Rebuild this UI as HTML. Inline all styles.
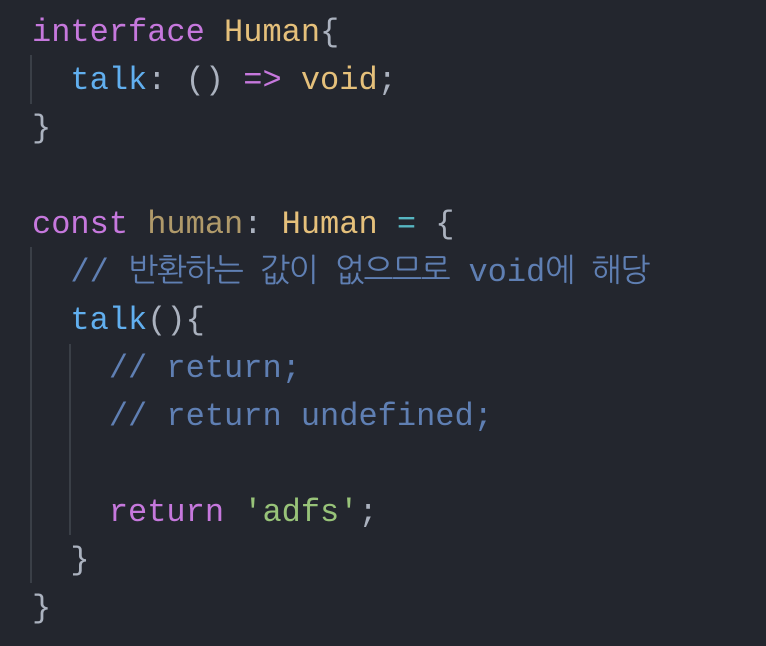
<!DOCTYPE html>
<html><head><meta charset="utf-8"><style>
html,body{margin:0;padding:0;background:#23262e;width:766px;height:646px;overflow:hidden}
.c{position:absolute;left:32px;top:0;font-family:"Liberation Mono","NanumGothic","Noto Sans CJK KR",monospace;font-size:32px;line-height:48px;color:#abb2bf}
.l{height:48px;white-space:pre}
.k{color:#c678dd}.y{color:#e5c07b}.b{color:#61afef}.h{color:#b09a6a}.cm{color:#5f7fb3}.s{color:#98c379}.o{color:#56b6c2}
.ko{letter-spacing:-1.5px}
.g{position:absolute;width:2px;background:#3a3f47}
</style></head><body>
<div class="g" style="left:30px;top:55px;height:49px"></div>
<div class="g" style="left:30px;top:247px;height:336px"></div>
<div class="g" style="left:69px;top:344px;height:191px"></div>
<div class="c" style="top:-39px">
<div class="l"><span style="opacity:.6">  }, (a)  (v)</span></div>
<div class="l"><span class="k">interface</span> <span class="y">Human</span>{</div>
<div class="l">  <span class="b">talk</span>: () <span class="k">=&gt;</span> <span class="y">void</span>;</div>
<div class="l">}</div>
<div class="l"></div>
<div class="l"><span class="k">const</span> <span class="h">human</span>: <span class="y">Human</span> <span class="o">=</span> {</div>
<div class="l">  <span class="cm">// <span class="ko">반환하는 값이 없으므로</span> void<span class="ko">에 해당</span></span></div>
<div class="l">  <span class="b">talk</span>(){</div>
<div class="l">    <span class="cm">// return;</span></div>
<div class="l">    <span class="cm">// return undefined;</span></div>
<div class="l"></div>
<div class="l">    <span class="k">return</span> <span class="s">'adfs'</span>;</div>
<div class="l">  }</div>
<div class="l">}</div>
</div>
</body></html>
